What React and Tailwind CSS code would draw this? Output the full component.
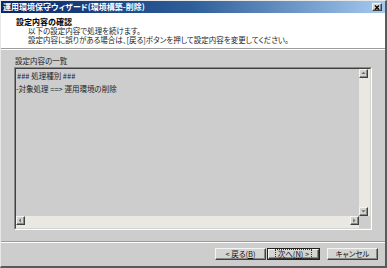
const ui = "font-['Noto_Sans_CJK_JP',sans-serif] [font-feature-settings:'palt']"

const raised =
  'border border-t-[#f4f4f4] border-l-[#f4f4f4] border-r-[#404040] border-b-[#404040] shadow-[inset_-1px_-1px_#8a8a8a] bg-[#d4d4d0]'

const Arrow = ({ dir }) => {
  const pts = {
    up: '1.5,4.5 4,2 6.5,4.5',
    down: '1.5,2.5 4,5 6.5,2.5',
    left: '4.5,1.5 2,4 4.5,6.5',
    right: '2.5,1.5 5,4 2.5,6.5',
  }
  return (
    <div className={`w-[9px] h-[9px] flex items-center justify-center ${raised}`}>
      <svg width="7" height="7" viewBox="0 0 8 8">
        <polygon points={pts[dir]} fill="#6e6e6e" />
      </svg>
    </div>
  )
}

const Button = ({ children, primary }) => (
  <div
    className={`h-[12px] flex items-center justify-center ${
      primary ? 'w-[53px] border border-[#202020]' : 'w-[51px]'
    }`}
  >
    <div className={`w-full h-full flex items-center justify-center ${raised}`}>
      <span
        className={`text-[7.5px] leading-[8px] text-[#111] px-[2px] ${
          primary ? 'outline outline-1 outline-dotted outline-[#333]' : ''
        }`}
      >
        {children}
      </span>
    </div>
  </div>
)

export default function App() {
  return (
    <div
      className={`w-[387px] h-[268px] bg-[#cdcdcd] flex flex-col overflow-hidden border-t border-l border-t-[#e8e8e8] border-l-[#e8e8e8] border-r-2 border-b-2 border-r-[#5a5a5a] border-b-[#5a5a5a] ${ui}`}
    >
      {/* title bar */}
      <div className="h-[12px] bg-linear-to-r from-[#0a246a] via-[#2f5f99] to-[#a6caf0] flex items-center justify-between pl-[2px] pr-[3px]">
        <span className="text-[8px] leading-[10px] font-bold text-white">
          運用環境保守ウィザード(環境構築-削除)
        </span>
        <div className={`w-[10px] h-[8px] flex items-center justify-center ${raised}`}>
          <svg width="6" height="5" viewBox="0 0 6 5">
            <path d="M1 0.5 L5 4.5 M5 0.5 L1 4.5" stroke="#000" strokeWidth="1.3" />
          </svg>
        </div>
      </div>

      {/* header */}
      <div className="h-[35px] bg-white pl-[15px] pt-[4px] text-black">
        <p className="text-[8px] leading-[9px] font-bold">設定内容の確認</p>
        <div className="pl-[12px] text-[7.5px] leading-[9px] text-[#222]">
          <p>以下の設定内容で処理を続けます。</p>
          <p>設定内容に誤りがある場合は、[戻る]ボタンを押して設定内容を変更してください。</p>
        </div>
      </div>
      <div className="h-[2px] border-t border-t-[#9c9c9c] border-b border-b-white" />

      {/* body */}
      <div className="pl-[13px] pt-[6px] pb-[11px]">
        <p className="text-[7.5px] leading-[9px] text-[#222] pl-[1px]">設定内容の一覧</p>
        <div className="mt-[2px] w-[358px] h-[163px] border border-t-[#8a8a8a] border-l-[#8a8a8a] border-r-white border-b-white">
          <div className="w-full h-full border border-t-[#404040] border-l-[#404040] border-r-[#d4d4d0] border-b-[#d4d4d0] flex flex-col">
            <div className="flex-1 flex">
              <div className="flex-1 pt-[2px] text-[7.5px] leading-[9px] text-[#222]">
                <p className="pl-[1px]">### 処理種別 ###</p>
                <p className="mt-[4px]">-対象処理 ==&gt; 運用環境の削除</p>
              </div>
              <div className="w-[11px] bg-[#e9e8e3] flex flex-col justify-between">
                <Arrow dir="up" />
                <Arrow dir="down" />
              </div>
            </div>
            <div className="h-[12px] flex">
              <div className="flex-1 bg-[#e9e8e3] flex justify-between items-start">
                <Arrow dir="left" />
                <Arrow dir="right" />
              </div>
              <div className="w-[11px] bg-[#cdcdcd]" />
            </div>
          </div>
        </div>
      </div>

      <div className="h-[2px] border-t border-t-[#9c9c9c] border-b border-b-white" />

      {/* buttons */}
      <div className="flex-1 flex justify-end items-start pt-[5px] pr-[7px]">
        <Button>
          &lt; 戻る(<span className="underline">B</span>)
        </Button>
        <div className="ml-[1px]">
          <Button primary>
            次へ(<span className="underline">N</span>) &gt;
          </Button>
        </div>
        <div className="ml-[7px]">
          <Button>キャンセル</Button>
        </div>
      </div>
    </div>
  )
}
